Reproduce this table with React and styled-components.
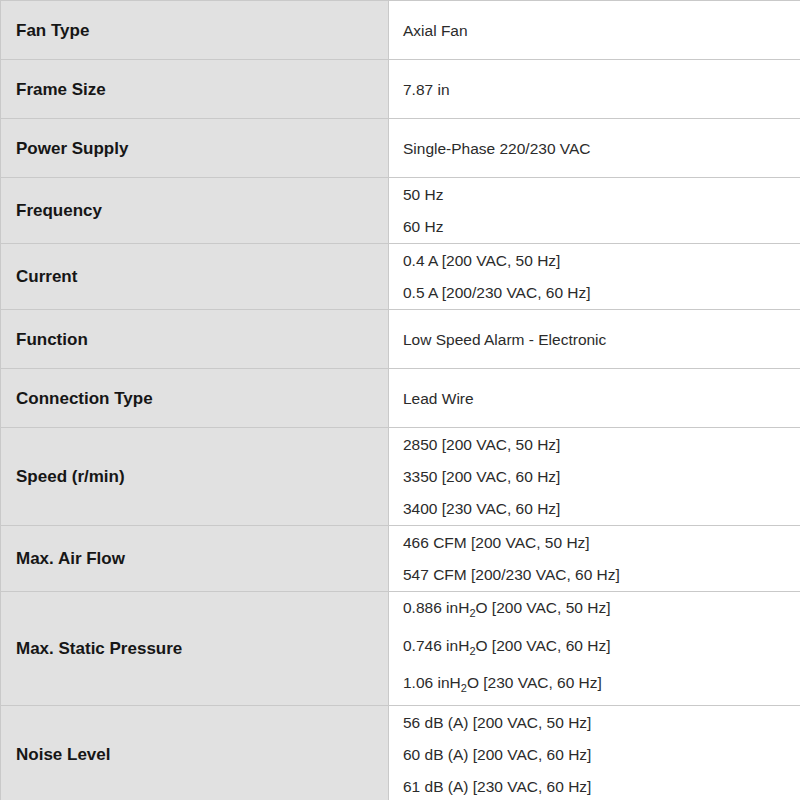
import React from 'react'
import styled, { createGlobalStyle } from 'styled-components';

const GlobalStyle = createGlobalStyle`
    body {
        margin: 0;
        background: #fff;
        font-family: "Liberation Sans", Arial, sans-serif;
    }
`;

const h2o = (v, cond) => <>{v} inH<sub>2</sub>O [{cond}]</>;

const specs = [
    { label: 'Fan Type', values: ['Axial Fan'] },
    { label: 'Frame Size', values: ['7.87 in'] },
    { label: 'Power Supply', values: ['Single-Phase 220/230 VAC'] },
    { label: 'Frequency', values: ['50 Hz', '60 Hz'] },
    { label: 'Current', values: ['0.4 A [200 VAC, 50 Hz]', '0.5 A [200/230 VAC, 60 Hz]'] },
    { label: 'Function', values: ['Low Speed Alarm - Electronic'] },
    { label: 'Connection Type', values: ['Lead Wire'] },
    { label: 'Speed (r/min)', values: ['2850 [200 VAC, 50 Hz]', '3350 [200 VAC, 60 Hz]', '3400 [230 VAC, 60 Hz]'] },
    { label: 'Max. Air Flow', values: ['466 CFM [200 VAC, 50 Hz]', '547 CFM [200/230 VAC, 60 Hz]'] },
    {
        label: 'Max. Static Pressure',
        tall: true,
        values: [
            h2o('0.886', '200 VAC, 50 Hz'),
            h2o('0.746', '200 VAC, 60 Hz'),
            h2o('1.06', '230 VAC, 60 Hz'),
        ],
    },
    { label: 'Noise Level', values: ['56 dB (A) [200 VAC, 50 Hz]', '60 dB (A) [200 VAC, 60 Hz]', '61 dB (A) [230 VAC, 60 Hz]'] },
];

const App = () => {
    return (
        <>
            <GlobalStyle />
            <SpecTable>
                {specs.map(spec => (
                    <SpecRow key={spec.label}>
                        <Label>{spec.label}</Label>
                        <ValueCell $tall={spec.tall}>
                            {spec.values.map((v, i) => (
                                <ValueLine key={i} $tall={spec.tall}>{v}</ValueLine>
                            ))}
                        </ValueCell>
                    </SpecRow>
                ))}
            </SpecTable>
        </>
    )
}

const SpecTable = styled.div`
    width: 800px;
    border-top: 1px solid #c9c9c9;
    border-left: 1px solid #c9c9c9;
    box-sizing: border-box;
`;

const SpecRow = styled.div`
    display: grid;
    grid-template-columns: 388px 1fr;
    border-bottom: 1px solid #c9c9c9;
`;

const Label = styled.div`
    display: flex;
    align-items: center;
    background: #e1e1e1;
    border-right: 1px solid #c9c9c9;
    padding: 1px 15px 0;
    font-size: 17px;
    font-weight: 700;
    color: #161616;
`;

const ValueCell = styled.div`
    display: flex;
    flex-direction: column;
    justify-content: center;
    min-height: 58px;
    padding: ${p => (p.$tall ? '0' : '1px')} 14px 0;
    box-sizing: border-box;
`;

const ValueLine = styled.div`
    font-size: 15.5px;
    color: #2b2b2b;
    line-height: ${p => (p.$tall ? '31px' : '32px')};
    padding-bottom: ${p => (p.$tall ? '6.7px' : '0')};

    sub {
        font-size: 11px;
        line-height: 0;
        vertical-align: -4px;
    }
`;

export default App
